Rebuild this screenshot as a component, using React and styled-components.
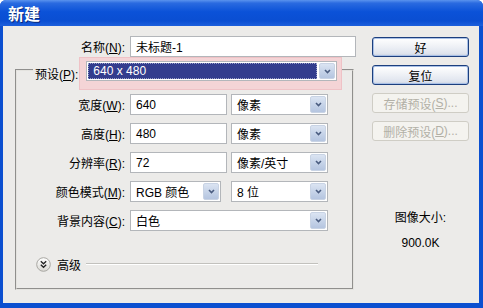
import React from "react";
import styled, { createGlobalStyle } from "styled-components";

const GlobalStyle = createGlobalStyle`
  html, body {
    margin: 0;
    padding: 0;
    background: #ffffff;
  }
  body {
    font-family: "Liberation Sans", "Noto Sans CJK SC", sans-serif;
    font-size: 12px;
    color: #000;
  }
`;

const Window = styled.div`
  width: 483px;
  height: 308px;
  display: flex;
  flex-direction: column;
  background: #0b4fd0;
  border-radius: 6px 6px 0 0;
  overflow: hidden;
`;

const TitleBar = styled.div`
  height: 26px;
  flex: none;
  display: flex;
  align-items: center;
  padding-left: 8px;
  background: linear-gradient(
    to bottom,
    #5a93ee 0%,
    #2a6ae0 12%,
    #0b52d8 45%,
    #0a4ed2 80%,
    #1d5fdc 100%
  );
  color: #fff;
  font-family: "Noto Sans CJK SC", sans-serif;
  font-weight: bold;
  font-size: 16px;
  text-shadow: 1px 1px 0 #0a2a7a;
`;

const Frame = styled.div`
  flex: 1;
  display: flex;
  background: #ecebe9;
  margin: 0 4px 5px 3px;
  padding: 10px 0 0 12px;
`;

const LeftCol = styled.div`
  width: 341px;
  display: flex;
  flex-direction: column;
`;

const RightCol = styled.div`
  width: 97px;
  margin-left: 16px;
  padding-top: 1px;
  display: flex;
  flex-direction: column;
  gap: 8px;
`;

const Row = styled.div`
  display: grid;
  grid-template-columns: ${(p) => p.$lw}px auto;
  column-gap: 5px;
  align-items: center;
  height: 21px;
`;

const Label = styled.div`
  text-align: right;
  white-space: nowrap;
`;

const U = styled.span`
  text-decoration: underline;
`;

const Controls = styled.div`
  display: flex;
  gap: ${(p) => p.$gap || 4}px;
  height: 21px;
`;

const TextBox = styled.div`
  width: ${(p) => p.$w}px;
  height: 21px;
  box-sizing: border-box;
  border: 1px solid #b3b6ba;
  background: #fff;
  display: flex;
  align-items: center;
  padding-left: 5px;
`;

const SelectBox = styled.div`
  width: ${(p) => p.$w}px;
  height: ${(p) => p.$h || 21}px;
  box-sizing: border-box;
  border: 1px solid #b3b6ba;
  background: #fff;
  display: flex;
  align-items: stretch;
`;

const SelectValue = styled.div`
  flex: 1;
  display: flex;
  align-items: center;
  padding-left: 5px;
  white-space: nowrap;
`;

const HighlightValue = styled.div`
  flex: 1;
  display: flex;
  align-items: center;
  padding-left: 5px;
  margin: 1px;
  background: #333d8e;
  color: #fff;
  outline: 1px dotted #9aa0c8;
  outline-offset: -1px;
`;

const DropBtn = styled.div`
  width: 16px;
  margin: 1px;
  box-sizing: border-box;
  border: 1px solid #c8d3e4;
  border-radius: 2px;
  background: linear-gradient(to bottom, #dbe4f2 0%, #c3d1e7 60%, #b5c5e0 100%);
  display: flex;
  align-items: center;
  justify-content: center;
`;

const GroupBox = styled.fieldset`
  margin: 0;
  width: 339px;
  box-sizing: border-box;
  padding: 11px 0 16px 0;
  border: 2px groove #e4e3df;
  min-width: 0;
  display: flex;
  flex-direction: column;
  gap: 8px;
`;

const Legend = styled.legend`
  margin-left: 16px;
  padding: 0 0 0 2px;
  height: 26px;
  display: flex;
  align-items: flex-start;
`;

const LegendLabel = styled.div`
  padding-top: 8px;
  white-space: nowrap;
`;

const Highlight = styled.div`
  margin-left: 1px;
  margin-bottom: -7px;
  padding: 3px 4px 8px 6px;
  background: #f4d4d6;
  border: 1px solid #efc2c6;
`;

const AdvancedRow = styled.div`
  margin-top: 17px;
  padding-left: 19px;
  padding-right: 34px;
  height: 16px;
  display: flex;
  align-items: center;
`;

const AdvText = styled.span`
  margin-left: 6px;
  white-space: nowrap;
`;

const Rule = styled.div`
  flex: 1;
  margin-left: 5px;
  height: 0;
  border-top: 1px solid #c2c1bd;
  border-bottom: 1px solid #fff;
`;

const Button = styled.div`
  height: 20px;
  box-sizing: border-box;
  border: 1px solid ${(p) => (p.$disabled ? "#cfcdc5" : "#1c3f7e")};
  border-radius: 3px;
  background: ${(p) =>
    p.$disabled
      ? "#f4f3ef"
      : "linear-gradient(to bottom, #ffffff 0%, #f1f3f7 40%, #dfe4ee 85%, #c9d1e0 100%)"};
  box-shadow: ${(p) =>
    p.$disabled ? "none" : "inset 0 0 0 1px #a9c0e6"};
  color: ${(p) => (p.$disabled ? "#b2b0a6" : "#000")};
  display: flex;
  align-items: center;
  justify-content: center;
  white-space: nowrap;
`;

const SizeBlock = styled.div`
  margin-top: 59px;
  display: flex;
  flex-direction: column;
  align-items: center;
  gap: 11px;
`;

const Chevron = () => (
  <svg width="9" height="7" viewBox="0 0 9 7">
    <polyline
      points="2,2 4.5,4.5 7,2"
      fill="none"
      stroke="#4a5c80"
      strokeWidth="1.6"
    />
  </svg>
);

const AdvIcon = () => (
  <svg width="15" height="15" viewBox="0 0 15 15">
    <defs>
      <linearGradient id="adv" x1="0" y1="0" x2="0" y2="1">
        <stop offset="0" stopColor="#ffffff" />
        <stop offset="1" stopColor="#d9d8d3" />
      </linearGradient>
    </defs>
    <circle cx="7.5" cy="7.5" r="6.8" fill="url(#adv)" stroke="#a8a7a2" />
    <polyline points="4.8,4.3 7.5,6.8 10.2,4.3" fill="none" stroke="#222" strokeWidth="1.3" />
    <polyline points="4.8,7.8 7.5,10.3 10.2,7.8" fill="none" stroke="#222" strokeWidth="1.3" />
  </svg>
);

const Select = ({ w, children }) => (
  <SelectBox $w={w}>
    <SelectValue>{children}</SelectValue>
    <DropBtn>
      <Chevron />
    </DropBtn>
  </SelectBox>
);

const rows = [
  { label: "宽度", key: "W", value: "640", unit: "像素" },
  { label: "高度", key: "H", value: "480", unit: "像素" },
  { label: "分辨率", key: "R", value: "72", unit: "像素/英寸" },
];

export default function App() {
  return (
    <>
      <GlobalStyle />
      <Window>
        <TitleBar>新建</TitleBar>
        <Frame>
          <LeftCol>
            <Row $lw={110}>
              <Label>
                名称(<U>N</U>):
              </Label>
              <TextBox $w={226}>未标题-1</TextBox>
            </Row>

            <GroupBox>
              <Legend>
                <LegendLabel>
                  预设(<U>P</U>):
                </LegendLabel>
                <Highlight>
                  <SelectBox $w={251} $h={20}>
                    <HighlightValue>640 x 480</HighlightValue>
                    <DropBtn>
                      <Chevron />
                    </DropBtn>
                  </SelectBox>
                </Highlight>
              </Legend>

              {rows.map((r) => (
                <Row $lw={108} key={r.key}>
                  <Label>
                    {r.label}(<U>{r.key}</U>):
                  </Label>
                  <Controls>
                    <TextBox $w={97}>{r.value}</TextBox>
                    <Select w={97}>{r.unit}</Select>
                  </Controls>
                </Row>
              ))}

              <Row $lw={108}>
                <Label>
                  颜色模式(<U>M</U>):
                </Label>
                <Controls $gap={10}>
                  <Select w={91}>RGB 颜色</Select>
                  <Select w={97}>8 位</Select>
                </Controls>
              </Row>

              <Row $lw={108}>
                <Label>
                  背景内容(<U>C</U>):
                </Label>
                <Controls>
                  <Select w={198}>白色</Select>
                </Controls>
              </Row>

              <AdvancedRow>
                <AdvIcon />
                <AdvText>高级</AdvText>
                <Rule />
              </AdvancedRow>
            </GroupBox>
          </LeftCol>

          <RightCol>
            <Button>好</Button>
            <Button>复位</Button>
            <Button $disabled>
              存储预设(<U>S</U>)...
            </Button>
            <Button $disabled>
              删除预设(<U>D</U>)...
            </Button>
            <SizeBlock>
              <div>图像大小:</div>
              <div>900.0K</div>
            </SizeBlock>
          </RightCol>
        </Frame>
      </Window>
    </>
  );
}
